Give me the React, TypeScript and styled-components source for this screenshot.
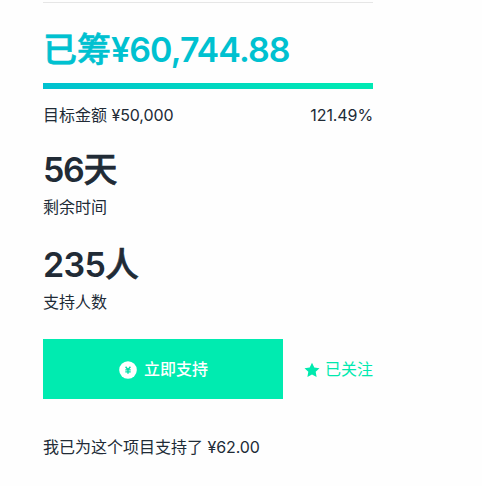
import React from "react";
import styled, { createGlobalStyle } from "styled-components";

const Global = createGlobalStyle`
  * { box-sizing: border-box; }
  body {
    margin: 0;
    background: #fefefe;
    color: #212b36;
    font: 16px/24px "Liberation Sans", "Noto Sans CJK SC", sans-serif;
  }
`;

const Panel = styled.main`
  display: flex;
  flex-direction: column;
  width: 330px;
  margin: 2px 0 0 43px;
  border-top: 1px solid #e6e6e6;
`;

const Figure = styled.div<{ $accent?: boolean }>`
  display: flex;
  align-items: baseline;
  height: 48px;
  font-size: 34px;
  line-height: 48px;
  font-weight: 500;
  -webkit-text-stroke: 0.6px currentColor;
  white-space: nowrap;
  color: ${(p) => (p.$accent ? "#00c1d0" : "#212b36")};
`;

const Digits = styled.span<{ $gap?: number }>`
  font-family: Inter, sans-serif;
  font-size: 34px;
  font-weight: 600;
  letter-spacing: ${(p) => p.$gap ?? -0.9}px;
  -webkit-text-stroke: 0;
`;

const Amount = styled.span`
  font-family: Inter, sans-serif;
  letter-spacing: -0.1px;
`;

const Raised = styled.section`
  padding-top: 23px;
`;

const Progress = styled.div`
  height: 6px;
  margin-top: 9px;
  background: linear-gradient(90deg, #00c1d0, #00e9b4 92%);
`;

const Goal = styled.div`
  display: flex;
  justify-content: space-between;
  height: 24px;
  margin-top: 14px;
`;

const Stat = styled.section<{ $top: number }>`
  display: flex;
  flex-direction: column;
  gap: 2px;
  height: 75px;
  margin-top: ${(p) => p.$top}px;
`;

const Actions = styled.div`
  display: flex;
  align-items: center;
  justify-content: space-between;
  height: 60px;
  margin-top: 23px;
`;

const Support = styled.button`
  display: flex;
  align-items: center;
  justify-content: center;
  gap: 7px;
  width: 240px;
  height: 60px;
  padding: 1px 0 0 1px;
  border: 0;
  background: #00ebb0;
  color: #fff;
  font: inherit;
  font-weight: 500;
`;

const Follow = styled.button`
  display: flex;
  align-items: center;
  gap: 5px;
  padding: 2px 0 0;
  border: 0;
  background: none;
  color: #00e9ae;
  font: inherit;
`;

const Note = styled.p`
  margin: 36px 0 0;
`;

const YenIcon = () => (
  <svg width="18" height="18" viewBox="0 0 18 18">
    <circle cx="9" cy="9" r="8.8" fill="#fff" />
    <path d="M6.6 5.7 9 8.7l2.4-3M6.3 8.9h5.4M6.3 10.9h5.4M9 8.5v4.2" fill="none" stroke="#00dda6" strokeWidth="1.4" />
  </svg>
);

const StarIcon = () => (
  <svg width="16" height="16" viewBox="0 0 16 16">
    <path d="M8 .7l2.3 4.8 5.2.7-3.8 3.6.9 5.3L8 12.6l-4.6 2.5.9-5.3L.5 6.2l5.2-.7z" fill="currentColor" />
  </svg>
);

export default function App() {
  return (
    <>
      <Global />
      <Panel>
        <Raised>
          <Figure $accent>
            已筹<Digits>¥60,744.88</Digits>
          </Figure>
          <Progress />
          <Goal>
            <span>目标金额 <Amount>¥50,000</Amount></span>
            <Amount>121.49%</Amount>
          </Goal>
        </Raised>
        <Stat $top={19}>
          <Figure>
            <Digits $gap={-1.3}>56</Digits>天
          </Figure>
          <span>剩余时间</span>
        </Stat>
        <Stat $top={20}>
          <Figure>
            <Digits $gap={-0.7}>235</Digits>人
          </Figure>
          <span>支持人数</span>
        </Stat>
        <Actions>
          <Support>
            <YenIcon />
            立即支持
          </Support>
          <Follow>
            <StarIcon />
            已关注
          </Follow>
        </Actions>
        <Note>我已为这个项目支持了 <Amount>¥62.00</Amount></Note>
      </Panel>
    </>
  );
}
